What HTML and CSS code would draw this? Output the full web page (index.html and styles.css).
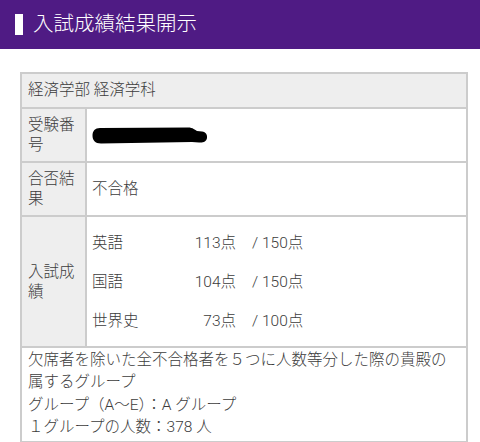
FILE: index.html
```html
<!DOCTYPE html>
<html lang="ja">
<head>
<meta charset="utf-8">
<title>入試成績結果開示</title>
<link rel="stylesheet" href="styles.css">
</head>
<body>
<header class="page-header">
  <span class="bar-mark"></span>
  <h1 class="page-title">入試成績結果開示</h1>
</header>
<main class="content">
  <table class="result">
    <tr>
      <th class="dept" colspan="2">経済学部 経済学科</th>
    </tr>
    <tr>
      <th class="label">受験番号</th>
      <td class="value">
        <svg class="redact" width="116" height="20" viewBox="0 0 116 20"><path d="M8 2 L96 1.5 C101 1.5 103 4 105 5 L110 5.5 C114 6 115.5 9 115 12 C114.5 15.5 111 17 107 16.5 L100 16 L9 17.5 C3 17.5 0.5 14 0.5 9.5 C0.5 5 3 2 8 2 Z" fill="#000"/></svg>
      </td>
    </tr>
    <tr>
      <th class="label">合否結果</th>
      <td class="value">不合格</td>
    </tr>
    <tr>
      <th class="label">入試成績</th>
      <td class="value scores-cell">
        <div class="scores">
          <span class="subj">英語</span><span class="pt">113点</span><span class="max">/ 150点</span>
          <span class="subj">国語</span><span class="pt">104点</span><span class="max">/ 150点</span>
          <span class="subj">世界史</span><span class="pt">73点</span><span class="max">/ 100点</span>
        </div>
      </td>
    </tr>
    <tr>
      <td class="note" colspan="2">欠席者を除いた全不合格者を５つに人数等分した際の貴殿の属するグループ<br>グループ（A〜E）：A グループ<br>１グループの人数：378 人</td>
    </tr>
  </table>
</main>
</body>
</html>
```

FILE: styles.css
```css
* { box-sizing: border-box; }
html, body {
  margin: 0;
  padding: 0;
  background: #ffffff;
}
body {
  font-family: Roboto, "Noto Sans CJK JP", sans-serif;
  font-weight: 300;
  color: #3c3c3c;
}
.page-header {
  background: #4f1b84;
  height: 49px;
  display: flex;
  align-items: center;
  padding-left: 15px;
}
.bar-mark {
  display: block;
  width: 8px;
  height: 21px;
  background: #ffffff;
  margin-right: 10px;
}
.page-title {
  margin: 0;
  font-size: 20.5px;
  font-weight: 300;
  color: #ffffff;
  line-height: 1;
}
.content {
  padding: 23px 12px 0 20px;
}
.result {
  width: 448px;
  border-collapse: collapse;
  font-size: 15.5px;
  line-height: 20px;
}
.result th, .result td {
  border: 2px solid #cccccc;
  font-weight: 300;
  text-align: left;
}
.dept {
  background: #eeeeee;
  padding: 6px 6px 7px 6px;
}
.label {
  background: #eeeeee;
  width: 65px;
  padding: 6px 6px 6px 6px;
  vertical-align: middle;
}
.value {
  background: #ffffff;
  padding: 6px 5px;
  vertical-align: middle;
}
.redact {
  display: block;
  margin-top: 2px;
}
.scores-cell {
  padding: 6px 5px;
}
.scores {
  display: grid;
  grid-template-columns: 100px 44px auto;
  grid-auto-rows: 39px;
  align-items: center;
}
.pt {
  text-align: right;
}
.max {
  padding-left: 16px;
}
.note {
  padding: 1px 6px 2px 6px;
  line-height: 22.4px;
}
```
